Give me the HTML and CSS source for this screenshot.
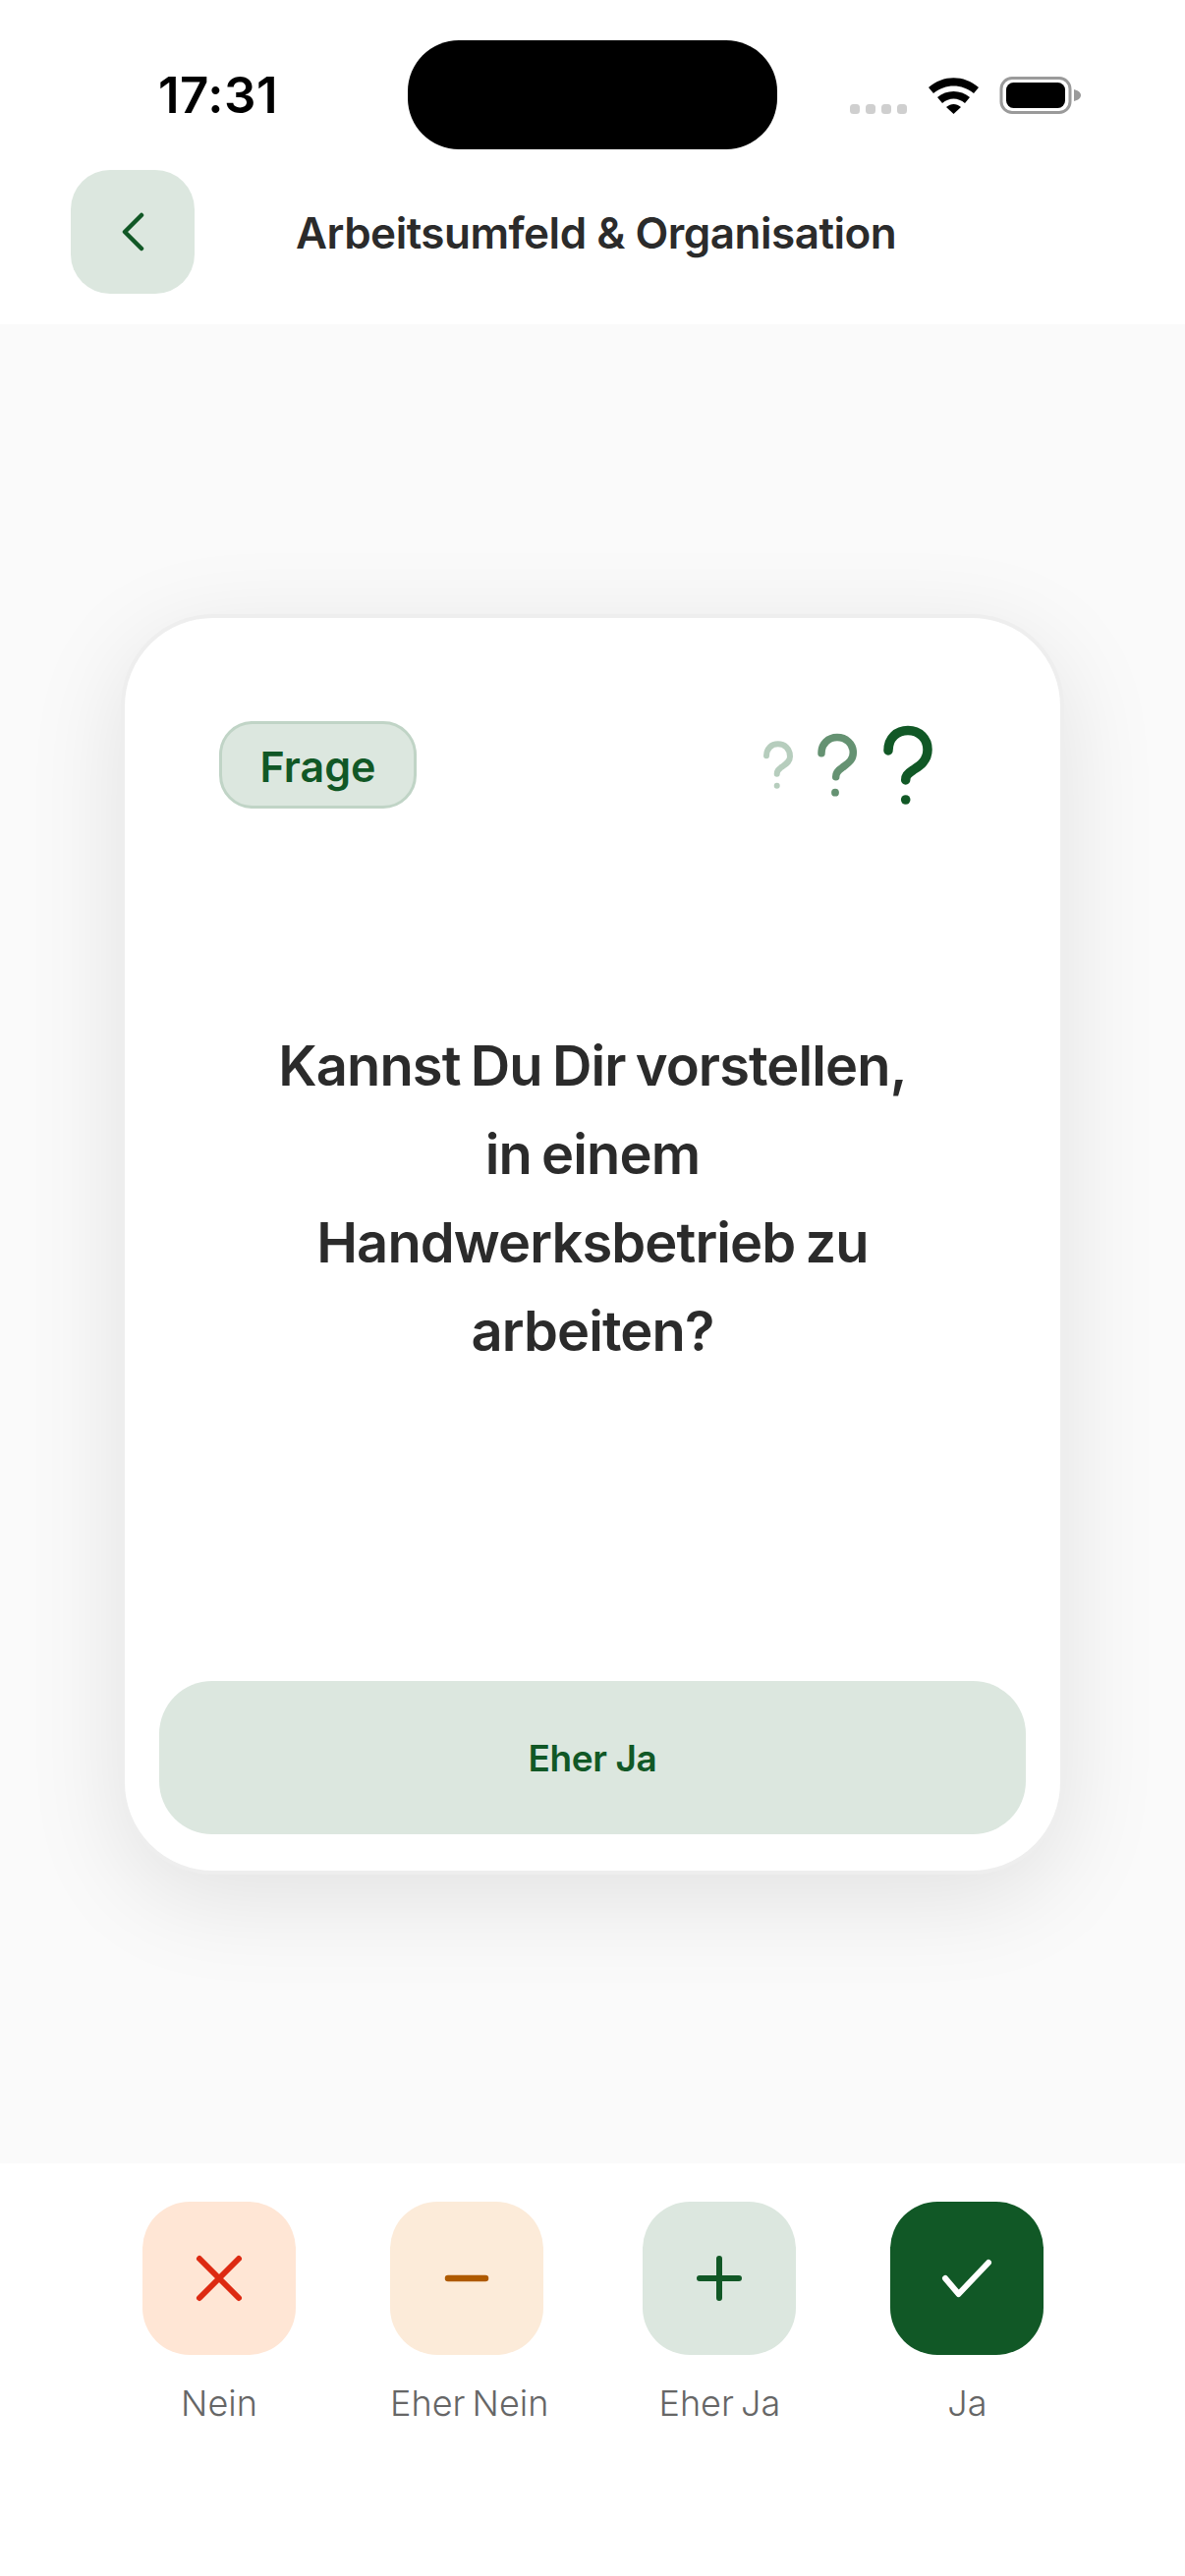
FILE: index.html
```html
<!doctype html>
<html lang="de">
  <head>
    <meta charset="utf-8" />
    <title>Frage</title>
    <meta name="viewport" content="width=device-width, initial-scale=1" />
    <link rel="stylesheet" href="styles.css">
  </head>

  <body>
    <div class="screen">
      <header class="top">
        <div class="status-bar">
          <div class="time">17:31</div>
          <div class="island"></div>
          <svg class="status-icons" width="235" height="38" viewBox="0 0 235 38">
            <g fill="#cfcfcf">
              <rect x="0" y="28" width="10" height="10" rx="3.5" />
              <rect x="16" y="28" width="10" height="10" rx="3.5" />
              <rect x="32" y="28" width="10" height="10" rx="3.5" />
              <rect x="48" y="28" width="10" height="10" rx="3.5" />
            </g>
            <path d="M80 11 C95 -2 116 -2 131 11 L126 17 C114 7 97 7 85 17 Z" />
            <path d="M89 21 C98 13 113 13 122 21 L117 27 C110 21 101 21 94 27 Z" />
            <path d="M98 31 C103 27 108 27 113 31 L105.500 38 Z" />
            <rect x="154" y="1.500" width="70" height="35" rx="11" fill="none" stroke="#9a9a9a" stroke-width="3" />
            <rect x="159" y="6" width="60" height="26" rx="7.500" />
            <path d="M228 13 C232 14 235 16 235 19 C235 22 232 24 228 25 Z" fill="#9a9a9a" />
          </svg>
        </div>
        <div class="nav">
          <button class="back">
            <svg width="40" height="50" viewBox="0 0 40 50" fill="none" stroke="#115826" stroke-width="4.500" stroke-linecap="round" stroke-linejoin="round">
              <path d="M29 8 L12 25 L29 42" />
            </svg>
          </button>
          <div class="nav-title">Arbeitsumfeld &amp; Organisation</div>
        </div>
      </header>

      <main class="content">
        <section class="card">
          <div class="card-head">
            <span class="badge">Frage</span>
            <svg width="180" height="90" viewBox="0 0 180 90" fill="none" stroke-linecap="round">
              <path d="M7 35.300 C7 28 12 23.300 18.700 23.300 C25.500 23.300 31 28 31 36 C31 42 26 44 22 47 C19 49.500 17.700 50.500 17.700 53.700" stroke="#b6cdbd" stroke-width="6" />
              <circle cx="17.700" cy="65.700" r="3" fill="#b6cdbd" />
              <path d="M63 32.700 C63 23 70 16.500 79 16.500 C88 16.500 95.300 23 95.300 32 C95.300 41 88 44 84 47.500 C80 50 77.700 52 77.700 56.700" stroke="#659272" stroke-width="7.500" />
              <circle cx="77" cy="72.700" r="3.900" fill="#659272" />
              <path d="M131 30 C131 17 140 9.500 151 9.500 C163 9.500 171 18 171 29 C171 41 162 46 156 50 C150 54 148.700 56 148.700 60" stroke="#115826" stroke-width="9.500" />
              <circle cx="148.700" cy="80" r="4.800" fill="#115826" />
            </svg>
          </div>
          <h1 class="question">Kannst Du Dir vorstellen,<br>in einem<br>Handwerksbetrieb zu<br>arbeiten?</h1>
          <div class="answer">Eher Ja</div>
        </section>
      </main>

      <footer class="choices">
        <div class="choice">
          <div class="choice-btn btn-no">
            <svg width="60" height="60" viewBox="0 0 60 60" fill="none" stroke="#dd2a12" stroke-width="6" stroke-linecap="round">
              <path d="M10 10 L50 50 M50 10 L10 50" />
            </svg>
          </div>
          <div class="choice-label">Nein</div>
        </div>
        <div class="choice">
          <div class="choice-btn btn-rather-no">
            <svg width="60" height="60" viewBox="0 0 60 60" fill="none" stroke="#ae5a00" stroke-width="6.500" stroke-linecap="round">
              <path d="M11 30 L49 30" />
            </svg>
          </div>
          <div class="choice-label">Eher Nein</div>
        </div>
        <div class="choice">
          <div class="choice-btn btn-rather-yes">
            <svg width="60" height="60" viewBox="0 0 60 60" fill="none" stroke="#115826" stroke-width="6" stroke-linecap="round">
              <path d="M10 30 L50 30 M30 10 L30 50" />
            </svg>
          </div>
          <div class="choice-label">Eher Ja</div>
        </div>
        <div class="choice">
          <div class="choice-btn btn-yes">
            <svg width="60" height="60" viewBox="0 0 60 60" fill="none" stroke="#fff" stroke-width="6" stroke-linecap="round" stroke-linejoin="round">
              <path d="M8 30 L21.600 46 L52 14" />
            </svg>
          </div>
          <div class="choice-label">Ja</div>
        </div>
      </footer>
    </div>
  </body>
</html>
```

FILE: styles.css
```css
html,
body {
  margin: 0;
  padding: 0;
  background: #fff;
  font-family: Inter, "Liberation Sans", sans-serif;
}
.screen {
  width: 1206px;
  height: 2622px;
  display: flex;
  flex-direction: column;
  overflow: hidden;
}
.top {
  height: 330px;
  padding-top: 41px;
  box-sizing: border-box;
  background: #fff;
}
.status-bar {
  height: 111px;
  display: grid;
  grid-template-columns: 415px 376px 415px;
  align-items: center;
}
.time {
  padding-left: 161px;
  font-size: 51px;
  font-weight: 600;
  letter-spacing: 0.5px;
  color: #000;
}
.island {
  height: 111px;
  background: #000;
  border-radius: 52px;
}
.status-icons {
  margin-left: 74px;
}
.nav {
  display: flex;
  align-items: center;
  margin-top: 21px;
  padding-left: 72px;
}
.back {
  width: 126px;
  height: 126px;
  padding: 0;
  border: 0;
  border-radius: 40px;
  background: #dce7df;
  display: flex;
  justify-content: center;
  align-items: center;
}
.nav-title {
  margin-left: 103px;
  padding-top: 2px;
  font-size: 44px;
  font-weight: 600;
  letter-spacing: -0.5px;
  color: #2b2b2b;
}
.content {
  flex: 1;
  background: #fafafa;
  display: flex;
  justify-content: center;
  align-items: center;
}
.card {
  width: 960px;
  height: 1283px;
  box-sizing: border-box;
  padding: 105px 35px 37px;
  border: 4px solid #eee;
  border-radius: 94px;
  background: #fff;
  box-shadow: 0 24px 100px rgba(0, 0, 0, 0.1);
  display: flex;
  flex-direction: column;
}
.card-head {
  display: flex;
  justify-content: space-between;
  align-items: center;
  padding: 0 91px 0 61px;
}
.badge {
  width: 201px;
  height: 89px;
  box-sizing: border-box;
  padding-top: 3px;
  border: 3px solid #c0d4c6;
  border-radius: 34px;
  background: #dce7df;
  display: flex;
  justify-content: center;
  align-items: center;
  font-size: 43px;
  font-weight: 600;
  color: #115826;
}
.question {
  margin: 216px 0 0;
  text-align: center;
  font-size: 56px;
  font-weight: 600;
  line-height: 90px;
  letter-spacing: -0.9px;
  word-spacing: -3px;
  color: #2b2b2b;
}
.answer {
  margin-top: auto;
  height: 156px;
  padding-top: 1px;
  box-sizing: border-box;
  border-radius: 54px;
  background: #dce7df;
  display: flex;
  justify-content: center;
  align-items: center;
  font-size: 37px;
  font-weight: 600;
  letter-spacing: -0.4px;
  color: #115826;
}
.choices {
  height: 420px;
  box-sizing: border-box;
  padding: 39px 0 0 145px;
  background: #fff;
  display: flex;
  gap: 96px;
}
.choice {
  display: flex;
  flex-direction: column;
  min-width: 156px;
}
.choice-btn {
  width: 156px;
  height: 156px;
  border-radius: 48px;
  display: flex;
  justify-content: center;
  align-items: center;
}
.btn-no {
  background: #ffe6d5;
}
.btn-rather-no {
  background: #fcebd9;
}
.btn-rather-yes {
  background: #dce7df;
}
.btn-yes {
  background: #115826;
}
.choice-label {
  margin-top: 27px;
  text-align: center;
  font-size: 36px;
  font-weight: 300;
  word-spacing: -3px;
  line-height: 44px;
  color: #666;
}
```
